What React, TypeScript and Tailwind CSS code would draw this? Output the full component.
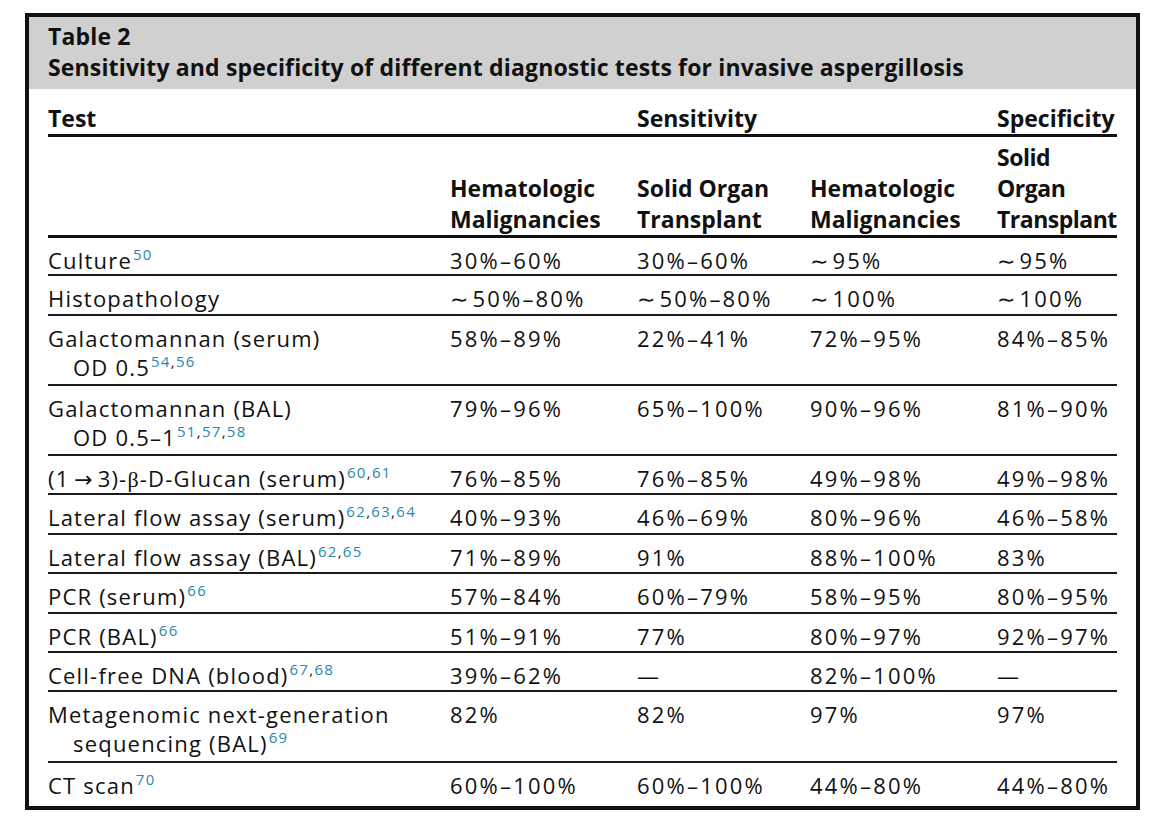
import React from "react";

const F = { fontFamily: '"Open Sans", "Noto Sans", "DejaVu Sans", sans-serif' };

const Ref = ({ parts }: { parts: string[] }) => (
  <span className="relative top-[-9px] text-[15px] leading-none tracking-[1.3px] ml-[1px]">
    {parts.map((p, i) => (
      <React.Fragment key={i}>
        {i > 0 && <span className="text-[#222]">,</span>}
        <span className="text-[#2b86ad]">{p}</span>
      </React.Fragment>
    ))}
  </span>
);

const Val = ({ v }: { v: string }) => {
  if (v.startsWith("∼")) {
    return (
      <>
        <span className="font-['DejaVu_Sans',sans-serif] tracking-normal mr-[4px]">∼</span>
        {v.slice(1)}
      </>
    );
  }
  return <>{v}</>;
};

type Row = { test: React.ReactNode; vals: string[]; h: string };

const rows: Row[] = [
  { test: <>Culture<Ref parts={["50"]} /></>, vals: ["30%–60%", "30%–60%", "∼95%", "∼95%"], h: "h-[38px]" },
  { test: <>Histopathology</>, vals: ["∼50%–80%", "∼50%–80%", "∼100%", "∼100%"], h: "h-[40px]" },
  {
    test: <>Galactomannan (serum)<br />OD 0.5<Ref parts={["54", "56"]} /></>,
    vals: ["58%–89%", "22%–41%", "72%–95%", "84%–85%"],
    h: "h-[70px]",
  },
  {
    test: <>Galactomannan (BAL)<br />OD 0.5–1<Ref parts={["51", "57", "58"]} /></>,
    vals: ["79%–96%", "65%–100%", "90%–96%", "81%–90%"],
    h: "h-[70px]",
  },
  {
    test: (
      <>
        (1{"\u2009"}
        <span className="tracking-normal">→</span>
        {"\u2009"}3)-<span className="font-['Liberation_Serif',serif]">β</span>-D-Glucan (serum)
        <Ref parts={["60", "61"]} />
      </>
    ),
    vals: ["76%–85%", "76%–85%", "49%–98%", "49%–98%"],
    h: "h-[39px]",
  },
  { test: <>Lateral flow assay (serum)<Ref parts={["62", "63", "64"]} /></>, vals: ["40%–93%", "46%–69%", "80%–96%", "46%–58%"], h: "h-[40px]" },
  { test: <>Lateral flow assay (BAL)<Ref parts={["62", "65"]} /></>, vals: ["71%–89%", "91%", "88%–100%", "83%"], h: "h-[39px]" },
  { test: <>PCR (serum)<Ref parts={["66"]} /></>, vals: ["57%–84%", "60%–79%", "58%–95%", "80%–95%"], h: "h-[40px]" },
  { test: <>PCR (BAL)<Ref parts={["66"]} /></>, vals: ["51%–91%", "77%", "80%–97%", "92%–97%"], h: "h-[39px]" },
  { test: <>Cell-free DNA (blood)<Ref parts={["67", "68"]} /></>, vals: ["39%–62%", "—", "82%–100%", "—"], h: "h-[39px]" },
  {
    test: <>Metagenomic next-generation<br />sequencing (BAL)<Ref parts={["69"]} /></>,
    vals: ["82%", "82%", "97%", "97%"],
    h: "h-[71px]",
  },
  { test: <>CT scan<Ref parts={["70"]} /></>, vals: ["60%–100%", "60%–100%", "44%–80%", "44%–80%"], h: "h-[42px]" },
];

const widths = ["w-[402px]", "w-[187px]", "w-[173px]", "w-[187px]", "w-[120px]"];

export default function App() {
  return (
    <div className="w-[1170px] h-[821px] bg-white pt-[13px] pl-[25px]" style={F}>
      <div className="w-[1115px] h-[797px] border-[4px] border-[#111] flex flex-col text-[#111] overflow-hidden">
        <div className="shrink-0 bg-[#d0d0d0] px-[19px] pt-[4px] h-[72px] font-bold text-[23px] leading-[31px] tracking-[0.15px] whitespace-nowrap">
          <div>Table 2</div>
          <div>Sensitivity and specificity of different diagnostic tests for invasive aspergillosis</div>
        </div>
        <div className="shrink-0 px-[19px] flex flex-col">
          <div className="shrink-0 flex font-bold text-[23px] leading-[31px] pt-[14px] h-[48px] border-b-[3px] border-[#111] whitespace-nowrap">
            <div className={widths[0]}>Test</div>
            <div className={widths[1]}></div>
            <div className={widths[2]}>Sensitivity</div>
            <div className={widths[3]}></div>
            <div className={widths[4]}>Specificity</div>
          </div>
          <div className="shrink-0 flex items-end font-bold text-[23px] leading-[31px] h-[101px] border-b-[3px] border-[#111] whitespace-nowrap">
            <div className={widths[0]}></div>
            <div className={widths[1]}>Hematologic<br />Malignancies</div>
            <div className={widths[2]}>Solid Organ<br />Transplant</div>
            <div className={widths[3]}>Hematologic<br />Malignancies</div>
            <div className={widths[4] + " tracking-[-0.5px]"}>Solid<br />Organ<br />Transplant</div>
          </div>
          {rows.map((r, i) => {
            const last = i === rows.length - 1;
            return (
              <div
                key={i}
                className={
                  "shrink-0 flex text-[22px] leading-[29px] pt-[8px] whitespace-nowrap " +
                  r.h +
                  (last ? "" : " border-b-[2px] border-[#1a1a1a]")
                }
              >
                <div className={widths[0] + " pl-[25px] -indent-[25px] tracking-[1.2px]"}>{r.test}</div>
                {r.vals.map((v, j) => (
                  <div key={j} className={widths[j + 1] + " tracking-[2.2px]"}>
                    <Val v={v} />
                  </div>
                ))}
              </div>
            );
          })}
        </div>
      </div>
    </div>
  );
}
